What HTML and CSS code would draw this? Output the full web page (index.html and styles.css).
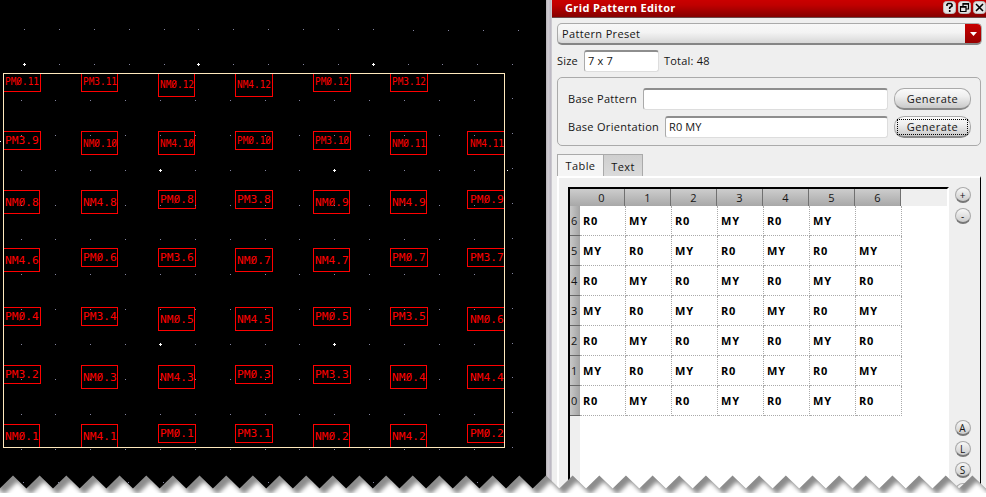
FILE: index.html
```html
<!DOCTYPE html>
<html lang="en">
<head>
<meta charset="utf-8">
<title>Grid Pattern Editor</title>
<link rel="stylesheet" href="styles.css">
</head>
<body>
<main class="workspace">
  <svg class="layout-canvas" id="layout" width="546" height="497" viewBox="0 0 546 497"></svg>
  <div class="splitter"></div>
  <section class="editor">
    <header class="titlebar">
      <h1>Grid Pattern Editor</h1>
      <div class="window-buttons">
        <svg width="13" height="13" viewBox="0 0 13 13"><rect class="wb" x=".5" y=".5" width="12" height="12" rx="3"/><path class="wi" d="M4 5V3.5L5 2.5H8L9 3.5V5L6.7 6.7V8M6.7 9V11"/></svg>
        <svg width="13" height="13" viewBox="0 0 13 13"><rect class="wb" x=".5" y=".5" width="12" height="12" rx="3"/><path class="wi thin" d="M5 5V2.5H10.5V8H8M5 3.2H10.5M2.5 5.5H8V10.5H2.5ZM2.5 6.2H8"/></svg>
        <svg width="13" height="13" viewBox="0 0 13 13"><rect class="wb" x=".5" y=".5" width="12" height="12" rx="3"/><path class="wi" d="M3 3L10 10M10 3L3 10"/></svg>
      </div>
    </header>
    <div class="combo"><span>Pattern Preset</span><span class="arrow"><svg width="7" height="4"><path d="M0 0H7L3.5 4Z" fill="#fff"/></svg></span></div>
    <div class="size-row"><span class="size-label">Size</span><span class="field size-field">7 x 7</span><span class="total">Total: 48</span></div>
    <div class="group">
      <div class="form-row"><span class="label-pattern">Base Pattern</span><span class="field grow"></span><span class="button">Generate</span></div>
      <div class="form-row"><span class="label-orient">Base Orientation</span><span class="field grow orient">R0 MY</span><span class="button focused">Generate</span></div>
    </div>
    <div class="tabs"><span class="tab active">Table</span><span class="tab text-tab">Text</span></div>
    <div class="pane">
      <div class="table-frame">
        <div class="head" id="head"></div>
        <div class="rows" id="rows"></div>
      </div>
      <div class="side">
        <span class="round">+</span><span class="round">-</span>
        <span class="spacer"></span>
        <span class="round">A</span><span class="round">L</span><span class="round">S</span><span class="round"></span>
      </div>
    </div>
  </section>
</main>
<svg class="torn" id="torn" width="986" height="24" viewBox="0 473 986 24"></svg>
<script src="app.js"></script>
</body>
</html>
```
FILE: styles.css
```css
* { box-sizing: border-box; }
body { margin: 0; width: 986px; height: 497px; overflow: hidden; position: relative; background: #fff; font-family: "Open Sans", sans-serif; font-size: 11px; line-height: 14px; color: #151515; }
.workspace { display: grid; grid-template-columns: 546px 6px 434px; height: 497px; }
.layout-canvas { display: block; background: #000; }
.splitter { background: linear-gradient(90deg, #b4b1b5, #d2cdd3 2px, #b9b5c1 5px, #ddd 6px); }
.editor { background: #efefef; display: flex; flex-direction: column; min-width: 0; height: 497px; overflow: hidden; }
.titlebar { flex: none; height: 18px; display: flex; justify-content: space-between; align-items: flex-start; padding: 0 0 0 13px; background: linear-gradient(#ca0000, #c00000 30%, #850000); border-bottom: 1px solid #6d4a4a; color: #fff; }
.titlebar h1 { margin: 1px 0 0; font-size: 11px; line-height: 14px; font-weight: 700; letter-spacing: .36px; }
.window-buttons { display: flex; gap: 2px; padding-top: 1px; margin-right: 0; }
.window-buttons svg { display: block; }
.wb { fill: #e4e4e4; stroke: #bbb; }
.wi { fill: none; stroke: #000; stroke-width: 1.6; }
.wi.thin { stroke-width: 1.2; }
.combo { flex: none; height: 22px; margin: 5px 4px 0 5px; display: flex; justify-content: space-between; align-items: center; padding-left: 4px; border: 1px solid #aaa; border-bottom: 2px solid #858585; border-radius: 5px; background: linear-gradient(#f8f8f8, #f3f3f3 45%, #d7d7d7); overflow: hidden; letter-spacing: .35px; }
.arrow { width: 16px; height: 20px; background: linear-gradient(#c80000, #950000); display: flex; align-items: center; justify-content: center; }
.size-row { flex: none; display: flex; align-items: center; height: 22px; margin: 5px 0 0 5px; letter-spacing: .22px; }
.size-label { width: 27px; }
.field { height: 22px; background: #fff; border: 1px solid #ddd; border-top: 2px solid #8e8e8e; border-left-color: #aaa; border-radius: 3px; padding: 2px 3px; letter-spacing: .2px; }
.size-field { width: 75px; margin-right: 5px; }
.group { flex: none; height: 69px; margin: 5px 5px 0; padding: 10px 9px 0 10px; border: 1px solid #aaa; border-radius: 5px; display: flex; flex-direction: column; gap: 6px; letter-spacing: .3px; }
.form-row { display: flex; align-items: center; height: 22px; }
.label-pattern { width: 75px; }
.label-orient { width: 97px; }
.grow { flex: 1; }
.orient { letter-spacing: .1px; }
.button { width: 77px; height: 22px; margin-left: 6px; border: 1px solid #aaa; border-bottom: 2px solid #888; border-radius: 10px; background: linear-gradient(#fafafa, #eee 40%, #c9c9c9); text-align: center; line-height: 20px; letter-spacing: .45px; position: relative; }
.focused::after { content: ""; position: absolute; inset: 2px 2px 1px; border: 1px dotted #000; }
.tabs { flex: none; height: 22px; margin: 8px 0 0 5px; display: flex; align-items: flex-start; letter-spacing: .4px; }
.tab { width: 47px; height: 22px; border: 1px solid #aaa; border-bottom: 0; text-align: center; line-height: 22px; background: #f5f5f5; }
.text-tab { width: 39px; border-left: 0; background: linear-gradient(#cfcfcf, #dadada); line-height: 24px; }
.pane { flex: 1; min-height: 0; width: 424px; margin-left: 5px; border-top: 2px solid #fff; border-left: 2px solid #fff; border-right: 1px solid #000; display: flex; padding: 9px 0 0 9px; }
.table-frame { width: 381px; border-top: 2px solid #000; border-left: 2px solid #000; border-right: 2px solid #fff; background: linear-gradient(90deg, #efefef 10px, #fff 10px); flex: none; }
.head { height: 17px; background: #efefef; display: grid; grid-template-columns: 55px repeat(6, 46px); font-size: 11px; text-align: center; line-height: 17px; }
.head span { background: linear-gradient(#cdcdcd, #a8a8a8); border-right: 1px solid #707070; }
.head span:first-child { padding-left: 9px; }
.row { display: grid; grid-template-columns: 10px 46px repeat(6, 46px); grid-template-rows: 30px; height: 30px; }
.row .index { background: linear-gradient(90deg, #c8c8c8, #a3a3a3); border-bottom: 1px solid #666; line-height: 30px; font-size: 11px; padding-left: 1px; }
.cell { border-right: 1px dotted #aaa; border-bottom: 1px dotted #aaa; padding: 8px 0 0 3px; font-weight: 700; letter-spacing: .8px; line-height: 14px; color: #000; }
.side { display: flex; flex-direction: column; align-items: center; gap: 5px; width: 27px; height: 312px; flex: none; }
.round { flex: none; width: 16px; height: 16px; border: 1px solid #aaa; border-bottom: 2px solid #777; border-radius: 50%; background: linear-gradient(#f8f8f8, #ccc); line-height: 14px; text-align: center; font-size: 10px; }
.spacer { flex: 1; }
.torn { position: absolute; left: 0; bottom: 0; display: block; }
.instance { fill: none; stroke: #f00; stroke-width: 1; shape-rendering: crispEdges; }
.name { fill: #f00; font-family: "DejaVu Sans Mono", monospace; }
.slash { stroke: #f00; stroke-width: .9; }
.boundary { fill: none; stroke: #ffe9bd; stroke-width: 1; shape-rendering: crispEdges; }
.dot { fill: #8585a0; }
.cross { fill: #fff; }
```
FILE: app.js
```js
const NS = 'http://www.w3.org/2000/svg';
function add(parent, tag, attrs, text) {
  const el = document.createElementNS(NS, tag);
  for (const k in attrs) el.setAttribute(k, attrs[k]);
  if (text) el.textContent = text;
  parent.appendChild(el);
  return el;
}

// Placed devices, listed from the top row down.
const layout = document.getElementById('layout');
const devices = [
  'PM0.11 PM3.11 NM0.12 NM4.12 PM0.12 PM3.12',
  'PM3.9 NM0.10 NM4.10 PM0.10 PM3.10 NM0.11 NM4.11',
  'NM0.8 NM4.8 PM0.8 PM3.8 NM0.9 NM4.9 PM0.9',
  'NM4.6 PM0.6 PM3.6 NM0.7 NM4.7 PM0.7 PM3.7',
  'PM0.4 PM3.4 NM0.5 NM4.5 PM0.5 PM3.5 NM0.6',
  'PM3.2 NM0.3 NM4.3 PM0.3 PM3.3 NM0.4 NM4.4',
  'NM0.1 NM4.1 PM0.1 PM3.1 NM0.2 NM4.2 PM0.2'
];
const colX = [3.5, 81.5, 158.5, 235.5, 313.5, 390.5, 467.5];
const rowY = [73.5, 131.5, 190.5, 248.5, 307.5, 365.5, 424.5];
const dotX = [21, 55, 90, 125, 160, 195, 230, 265, 299, 334, 369, 404, 439, 474];
const dotY = [100, 135, 170, 205, 239, 274, 309, 344, 379, 414, 449];

devices.forEach((line, r) => line.split(' ').forEach((name, c) => {
  const p = name[0] === 'P';
  const six = name.length === 6;
  const x = colX[c], y = rowY[r];
  const w = c === 6 ? 37 : c === 1 ? 36 : c === 3 || p ? 37 : 36;
  add(layout, 'rect', { class: 'instance', x, y, width: w, height: p ? 18 : 23 });
  const size = six ? 9.8 : 11;
  const mid = y + (p ? 9 : 11.6) - (r === 0 ? .7 : 0);
  const tx = x + 1.6 + (c === 6 ? 1 : 0);
  add(layout, 'text', { class: 'name', x: tx, y: mid + size * .363, 'font-size': size, textLength: 33.8, lengthAdjust: 'spacingAndGlyphs' }, name);
  // Zeros carry a slash to tell them from the letter O.
  const step = 33.8 / name.length;
  [...name].forEach((ch, i) => {
    if (ch !== '0') return;
    const mx = tx + step * (i + .5);
    add(layout, 'path', { class: 'slash', d: `M${mx - 2.4} ${mid + size * .36}L${mx + 2.4} ${mid - size * .36}` });
  });
}));

function dot(x, y) { add(layout, 'rect', { class: 'dot', x, y, width: 1, height: 1 }); }
function cross(x, y) {
  add(layout, 'path', { class: 'cross', d: `M${x} ${y - 1}h1v1h1v1h-1v1h-1v-1h-1v-1h1z` });
}
[24, 59, 94, 129, 164, 198, 233, 268, 303, 338, 373].forEach(x => dot(x, 29));
[413, 448, 483, 518].forEach(x => dot(x, 30));
[59, 94, 129, 164, 233, 268, 303, 338, 408, 442, 477, 512].forEach(x => dot(x, 64));
dotY.forEach(y => dotX.forEach(x => dot(x, y)));
[98, 133, 168, 203, 238, 273, 308, 343, 377, 412, 447].forEach(y => dot(512, y));
[23, 58, 128, 163, 268, 373, 477].forEach(x => dot(x, 482));
[[24, 64], [198, 64], [373, 64], [160, 170], [334, 170], [160, 344], [334, 344]].forEach(p => cross(...p));
add(layout, 'rect', { class: 'cross', x: 507, y: 170, width: 1, height: 1 });
add(layout, 'rect', { class: 'cross', x: 0, y: 141, width: 1, height: 1 });
add(layout, 'rect', { class: 'boundary', x: 3.5, y: 73.5, width: 501, height: 374 });

// Orientation table
const head = document.getElementById('head');
for (let c = 0; c < 7; c++) {
  const s = document.createElement('span');
  s.textContent = c;
  head.appendChild(s);
}
const rows = document.getElementById('rows');
for (let r = 6; r >= 0; r--) {
  const row = document.createElement('div');
  row.className = 'row';
  const idx = document.createElement('span');
  idx.className = 'index';
  idx.textContent = r;
  row.appendChild(idx);
  for (let c = 0; c < 7; c++) {
    const cell = document.createElement('span');
    cell.className = 'cell';
    cell.textContent = r === 6 && c === 6 ? '' : (r + c) % 2 ? 'MY' : 'R0';
    row.appendChild(cell);
  }
  rows.appendChild(row);
}

// Torn bottom edge
const torn = document.getElementById('torn');
function zigzag(dx, dy) {
  let d = `M-60 520V${488.5 + dy}`;
  for (let i = -2; i < 40; i++) {
    const px = 13 + i * 26.65 + dx;
    d += `L${px - 13.3} ${488.5 + dy}L${px} ${475.5 + dy}`;
  }
  return d + 'V520Z';
}
const defs = add(torn, 'defs', {});
add(add(defs, 'clipPath', { id: 'edge' }), 'path', { d: zigzag(0, 0) });
add(add(defs, 'filter', { id: 'soft', x: '-5%', y: '-50%', width: '110%', height: '200%' }), 'feGaussianBlur', { stdDeviation: 2.2 });
const g = add(torn, 'g', { 'clip-path': 'url(#edge)' });
add(g, 'rect', { x: 0, y: 473, width: 986, height: 24, fill: '#8c8c8c' });
add(g, 'path', { d: zigzag(4.5, 6), fill: '#fff', filter: 'url(#soft)' });
add(g, 'rect', { x: 0, y: 493, width: 986, height: 4, fill: '#fff' });
```
